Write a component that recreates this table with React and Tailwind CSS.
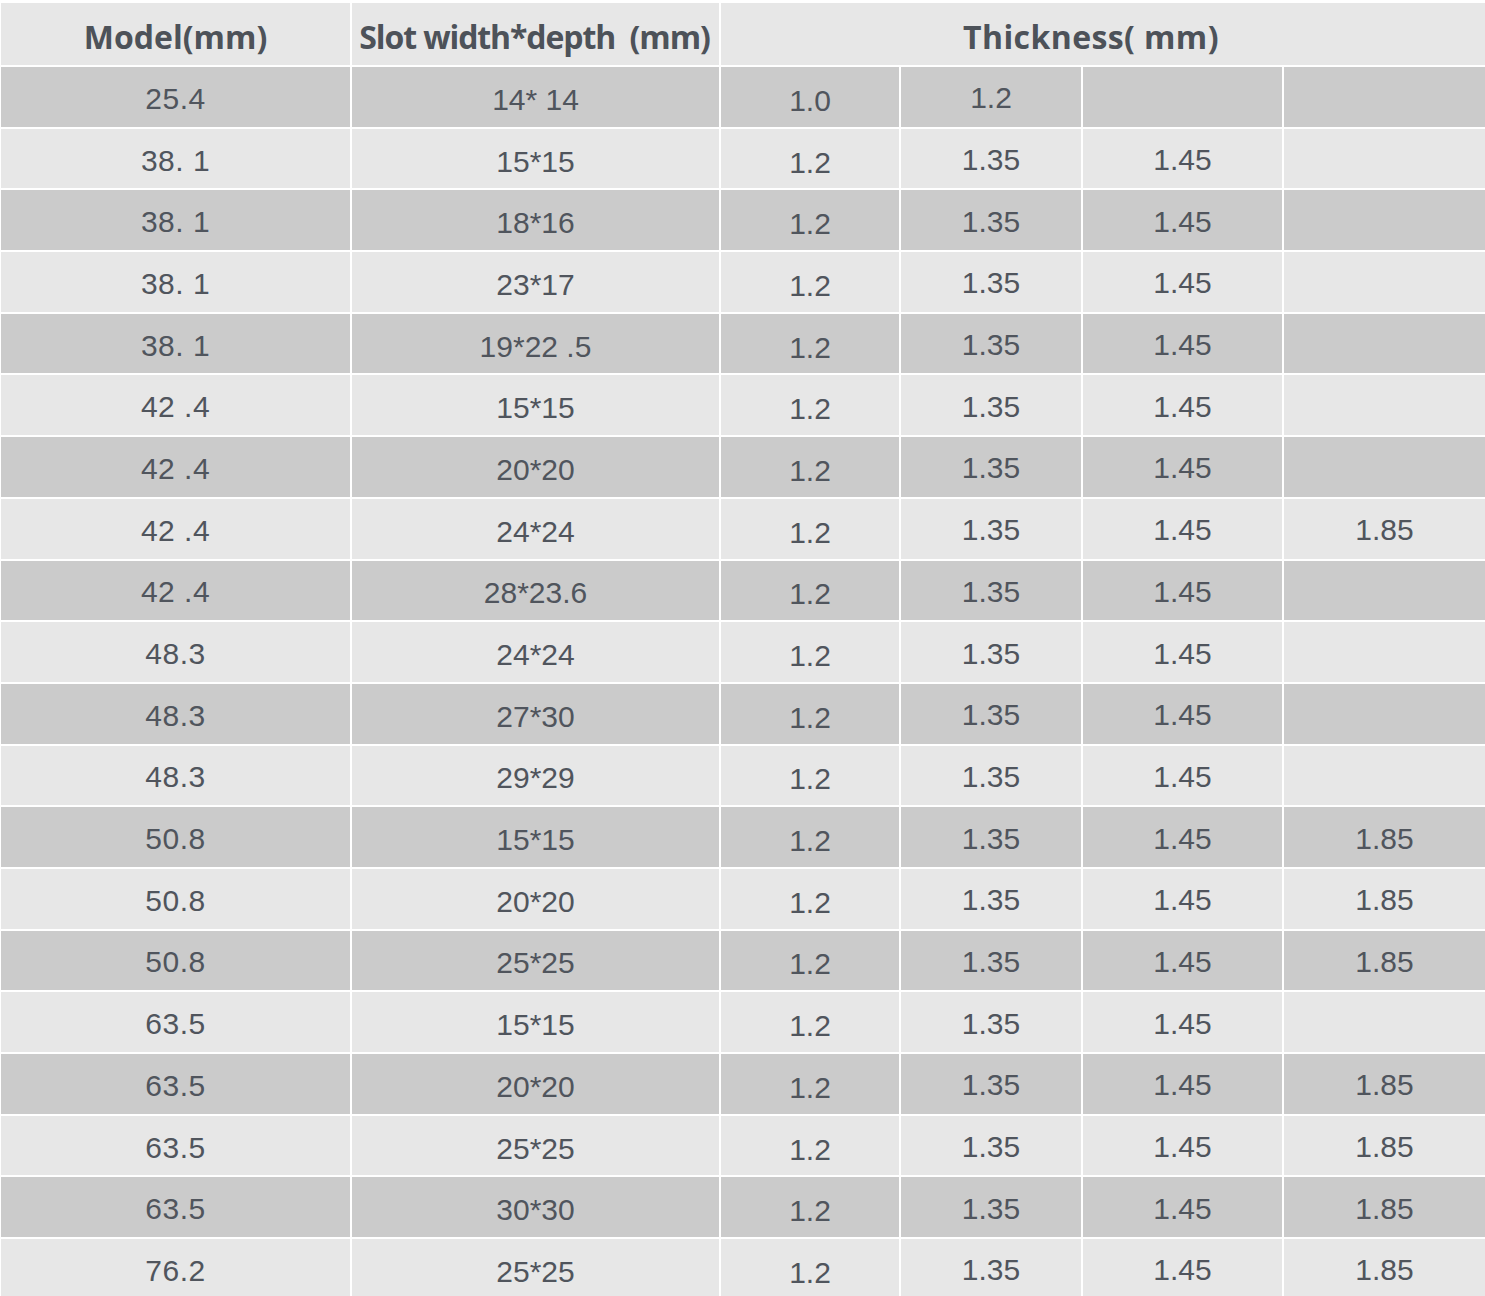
import React from "react";

const rows = [
  ["25.4", "14* 14", "1.0", "1.2", "", ""],
  ["38. 1", "15*15", "1.2", "1.35", "1.45", ""],
  ["38. 1", "18*16", "1.2", "1.35", "1.45", ""],
  ["38. 1", "23*17", "1.2", "1.35", "1.45", ""],
  ["38. 1", "19*22 .5", "1.2", "1.35", "1.45", ""],
  ["42 .4", "15*15", "1.2", "1.35", "1.45", ""],
  ["42 .4", "20*20", "1.2", "1.35", "1.45", ""],
  ["42 .4", "24*24", "1.2", "1.35", "1.45", "1.85"],
  ["42 .4", "28*23.6", "1.2", "1.35", "1.45", ""],
  ["48.3", "24*24", "1.2", "1.35", "1.45", ""],
  ["48.3", "27*30", "1.2", "1.35", "1.45", ""],
  ["48.3", "29*29", "1.2", "1.35", "1.45", ""],
  ["50.8", "15*15", "1.2", "1.35", "1.45", "1.85"],
  ["50.8", "20*20", "1.2", "1.35", "1.45", "1.85"],
  ["50.8", "25*25", "1.2", "1.35", "1.45", "1.85"],
  ["63.5", "15*15", "1.2", "1.35", "1.45", ""],
  ["63.5", "20*20", "1.2", "1.35", "1.45", "1.85"],
  ["63.5", "25*25", "1.2", "1.35", "1.45", "1.85"],
  ["63.5", "30*30", "1.2", "1.35", "1.45", "1.85"],
  ["76.2", "25*25", "1.2", "1.35", "1.45", "1.85"],
];

const cellPad = [
  "pt-[4px] tracking-[0.5px]",
  "pt-[6px]",
  "pt-[8px]",
  "pt-[3px]",
  "pt-[3px]",
  "pt-[3px]",
];

const headCls =
  "bg-[#e7e7e7] flex items-center justify-center pt-[6px] text-[32px] font-bold text-[#4d5259] whitespace-pre font-['Open_Sans',sans-serif]";

export default function App() {
  return (
    <div className="w-[1485px] h-[1296px] overflow-hidden bg-white">
      <div className="grid grid-cols-[349px_367px_178px_180px_199px_201px] grid-rows-[62px] auto-rows-[59.7px] gap-[2px] pl-[1px] pt-[3px] text-[#50555d] font-['Liberation_Sans',Arial,sans-serif]">
        <div className={headCls}>Model(mm)</div>
        <div className={headCls + " pr-[2px] tracking-[-1.1px]"}>
          {"Slot width*depth  (mm)"}
        </div>
        <div className={headCls + " col-span-4 pr-[24px] tracking-[0.4px]"}>
          {"Thickness( mm)"}
        </div>
        {rows.map((r, i) =>
          r.map((v, j) => (
            <div
              key={i + "-" + j}
              className={
                (i % 2 === 0 ? "bg-[#cbcbcb]" : "bg-[#e7e7e7]") +
                " flex items-center justify-center text-[30px] leading-none whitespace-pre " +
                cellPad[j]
              }
            >
              {v}
            </div>
          ))
        )}
      </div>
    </div>
  );
}
